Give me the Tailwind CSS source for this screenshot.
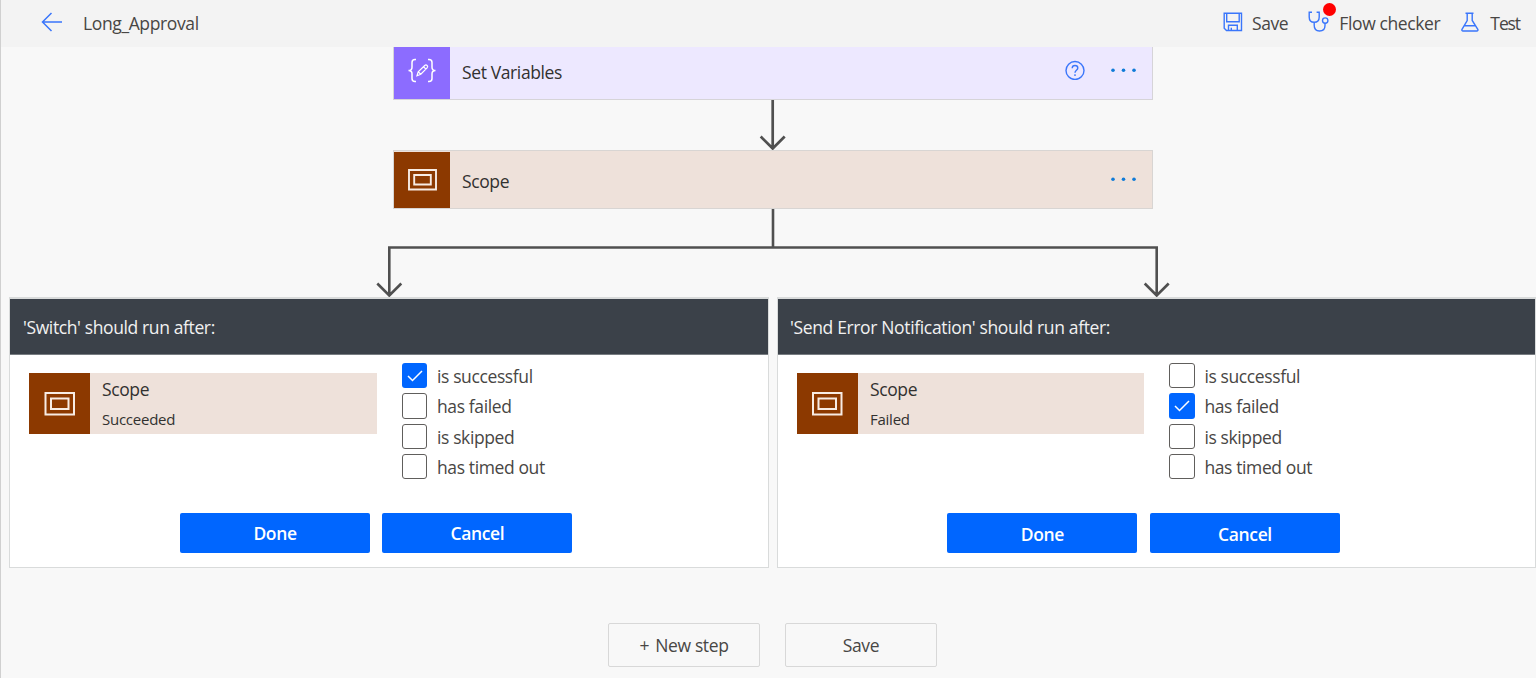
<!DOCTYPE html>
<html lang="en">
<head>
    <meta charset="UTF-8">
    <meta name="viewport" content="width=device-width, initial-scale=1.0">
    <title>Long_Approval</title>
    <script src="https://cdn.jsdelivr.net/npm/@tailwindcss/browser@4"></script>
</head>
<body class="h-[678px] overflow-hidden bg-[#f8f8f8] font-['Open_Sans','Noto_Sans',sans-serif] text-[17.5px] leading-6 tracking-[-0.38px] text-[#484644]">
<div class="h-full w-[1537px] border-l border-[#d0d0d0]">
    <header class="flex h-[47px] items-start justify-between bg-[#f3f3f3] pl-10 pr-[17px]">
        <div class="flex pt-[11px]">
            <svg class="mt-px h-5 w-[22px]" viewBox="0 0 22 20" fill="none" stroke="#3a76fb" stroke-width="1.5"><path d="M21 10H1.5M10.5 1L1.5 10l9 9"/></svg>
            <h1 class="ml-5">Long_Approval</h1>
        </div>
        <nav class="flex pt-[11px]">
            <button class="flex">
                <svg class="mt-px h-5 w-5" viewBox="0 0 20 20" fill="none" stroke="#3a76fb" stroke-width="1.4"><path d="M1.2 1.2h17.3v17.3H3.5l-2.300-2.200zM3.700 1.200v8.500h12.500v-8.500M5.500 18.500v-5.300h8.800v5.300M8.300 18.500v-2.800"/></svg>
                <span class="ml-[9px]">Save</span>
            </button>
            <button class="relative ml-5 flex">
                <svg class="h-[22px] w-[22px]" viewBox="0 0 22 22" fill="none" stroke="#3a76fb" stroke-width="1.4"><path d="M4 1.200H1.200V6c0 3.200 2 5.300 5 5.300s5-2.100 5-5.300V1.200H8.600M6.200 11.300v2.900c0 3.600 2 5.800 5.300 5.800s5.500-2.200 5.500-5.500v-2.200"/><circle cx="17.200" cy="9.600" r="2.700"/></svg>
                <span class="absolute -top-2 left-[15px] size-[13px] rounded-full bg-[#ff0000]"></span>
                <span class="ml-[9px]">Flow checker</span>
            </button>
            <button class="ml-[21px] flex">
                <svg class="mt-px h-5 w-[18px]" viewBox="0 0 18 20" fill="none" stroke="#3a76fb" stroke-width="1.4"><path d="M4.500 1.200h8M6.200 1.200v7.300L1 17.300c-.4.900 0 1.700 1 1.700h13.800c1 0 1.400-.8 1-1.700L11.200 8.500V1.200M3.500 13.800h10.800"/></svg>
                <span class="ml-[11px] tracking-[-1.1px]">Test</span>
            </button>
        </nav>
    </header>

    <main>
        <!-- Set Variables -->
        <section class="ml-[392px] flex h-[53px] w-[760px] border-x border-b border-[#d6d4d8] bg-[#ede8ff] text-[#323130]">
            <div class="flex w-14 justify-center bg-[#8c6cff] pt-[11px]">
                <svg class="h-[26px] w-[30px]" viewBox="0 0 30 26" fill="none" stroke="#fff" stroke-width="1.5"><path d="M9 1.500H8c-2 0-3 1-3 3v4.700c0 2-1.200 3.300-3.500 3.300C3.800 12.500 5 13.800 5 15.800v4.700c0 2 1 3 3 3h1M21 1.500h1c2 0 3 1 3 3v4.700c0 2 1.200 3.300 3.500 3.300-2.300 0-3.500 1.300-3.500 3.300v4.700c0 2-1 3-3 3h-1"/><path stroke-width="1.200" d="M10 17.700l1.200-4 6.500-6.200c.8-.7 1.700-.7 2.400 0s.7 1.600 0 2.300l-6.300 6.400zM11.200 13.700l2.600 2.500M16.500 8.700l2.500 2.400"/></svg>
            </div>
            <h2 class="ml-3 mt-[13px]">Set Variables</h2>
            <svg class="ml-auto mt-[13px] h-5 w-5" viewBox="0 0 20 20" fill="none" stroke="#3a76fb" stroke-width="1.400"><circle cx="10" cy="10.500" r="9"/><path d="M7.200 8.200c0-1.700 1.200-2.700 2.800-2.700s2.800 1 2.800 2.500c0 2.200-2.800 2.400-2.800 4.700M10 14.300v1.600"/></svg>
            <svg class="ml-[26px] mr-[15px] mt-[21px] h-1 w-[26px]" viewBox="0 0 26 4" fill="#0f7bd8"><circle cx="2" cy="2.200" r="1.800"/><circle cx="12.500" cy="2.200" r="1.800"/><circle cx="23" cy="2.200" r="1.800"/></svg>
        </section>
        <svg class="ml-[757px] h-[50px] w-[30px]" viewBox="0 0 30 50" fill="none" stroke="#505050" stroke-width="2.700"><path d="M14.700 0v48M2.700 36.500l12 12 12-12"/></svg>

        <!-- Scope -->
        <section class="ml-[392px] flex h-[59px] w-[760px] border border-[#d8d5d3] bg-[#eee1da] text-[#323130]">
            <div class="mt-px flex w-14 items-center justify-center bg-[#8c3900]">
                <svg class="h-[22px] w-[29px]" viewBox="0 0 29 22" fill="none" stroke="#f7ece4" stroke-width="1.900"><path d="M1 1h27v19.500H1zM6.200 6h16.600v9.500H6.200z"/></svg>
            </div>
            <h2 class="ml-3 mt-[18px]">Scope</h2>
            <svg class="ml-auto mr-[15px] mt-[26px] h-1 w-[26px]" viewBox="0 0 26 4" fill="#0f7bd8"><circle cx="2" cy="2.200" r="1.800"/><circle cx="12.500" cy="2.200" r="1.800"/><circle cx="23" cy="2.200" r="1.800"/></svg>
        </section>
        <svg class="ml-[373px] h-[88px] w-[800px]" viewBox="0 0 800 88" fill="none" stroke="#505050" stroke-width="2.600"><path d="M399 0v38M15.300 86V38.500h767.400V86M3.300 74.500l12 12 12-12M770.700 74.500l12 12 12-12"/></svg>

        <div class="ml-2 flex gap-2">
            <!-- Run after: Switch -->
            <section class="h-[271px] w-[760px] shrink-0 border border-t-2 border-[#d9dbdb] bg-white">
                <h3 class="flex h-14 items-center border-b border-[#777c81] bg-[#3b4149] pl-[13px] text-[#f1f1f1]">'Switch' should run after:</h3>
                <div class="flex pl-[19px] pt-2">
                    <div class="mt-[10px] flex h-[61px] w-[348px] bg-[#eee1da] text-[#323130]">
                        <div class="flex w-[61px] items-center justify-center bg-[#8c3900]">
                            <svg class="h-6 w-[31px]" viewBox="0 0 31 24" fill="none" stroke="#f7ece4" stroke-width="2"><path d="M1.500 1h28.500v21.500H1.500zM7 6.500h17.500v10.500H7z"/></svg>
                        </div>
                        <div class="ml-3 mt-1">
                            <p>Scope</p>
                            <p class="mt-1.5 text-[15px] tracking-[-0.25px]">Succeeded</p>
                        </div>
                    </div>
                    <ul class="ml-[25px]">
                        <li class="flex h-[30.400px]"><span class="flex size-[25.300px] items-center justify-center rounded-[3px] bg-[#0066ff]"><svg class="h-3 w-4" viewBox="0 0 16 12" fill="none" stroke="#fff" stroke-width="1.500"><path d="M1 6l4.500 4.500L15 1"/></svg></span><span class="ml-[9.700px] mt-px">is successful</span></li>
                        <li class="flex h-[30.400px]"><span class="size-[25.300px] rounded-[3px] border border-[#605e5c]"></span><span class="ml-[9.700px] mt-px">has failed</span></li>
                        <li class="flex h-[30.400px]"><span class="size-[25.300px] rounded-[3px] border border-[#605e5c]"></span><span class="ml-[9.700px] mt-px">is skipped</span></li>
                        <li class="flex h-[30.400px]"><span class="size-[25.300px] rounded-[3px] border border-[#605e5c]"></span><span class="ml-[9.700px] mt-px">has timed out</span></li>
                    </ul>
                </div>
                <div class="ml-[170px] mt-7 flex gap-[12.400px] font-semibold text-white">
                    <button class="h-10 w-[190px] rounded-[2px] bg-[#0066ff]">Done</button>
                    <button class="h-10 w-[190px] rounded-[2px] bg-[#0066ff]">Cancel</button>
                </div>
            </section>

            <!-- Run after: Send Error Notification -->
            <section class="h-[271px] w-[759px] shrink-0 border border-t-2 border-[#d9dbdb] bg-white">
                <h3 class="flex h-14 items-center border-b border-[#777c81] bg-[#3b4149] pl-3 tracking-[-0.35px] text-[#f1f1f1]">'Send Error Notification' should run after:</h3>
                <div class="flex pl-[19px] pt-2">
                    <div class="mt-[10px] flex h-[61px] w-[347px] bg-[#eee1da] text-[#323130]">
                        <div class="flex w-[61px] items-center justify-center bg-[#8c3900]">
                            <svg class="h-6 w-[31px]" viewBox="0 0 31 24" fill="none" stroke="#f7ece4" stroke-width="2"><path d="M1 1h28.500v21.500H1zM6.500 6.500h17.500v10.500H6.500z"/></svg>
                        </div>
                        <div class="ml-3 mt-1">
                            <p>Scope</p>
                            <p class="mt-1.5 text-[15px] tracking-[-0.25px]">Failed</p>
                        </div>
                    </div>
                    <ul class="ml-[25.400px]">
                        <li class="flex h-[30.400px]"><span class="size-[25.300px] rounded-[3px] border border-[#605e5c]"></span><span class="ml-[9.700px] mt-px">is successful</span></li>
                        <li class="flex h-[30.400px]"><span class="flex size-[25.300px] items-center justify-center rounded-[3px] bg-[#0066ff]"><svg class="h-3 w-4" viewBox="0 0 16 12" fill="none" stroke="#fff" stroke-width="1.500"><path d="M1 6l4.500 4.500L15 1"/></svg></span><span class="ml-[9.700px] mt-px">has failed</span></li>
                        <li class="flex h-[30.400px]"><span class="size-[25.300px] rounded-[3px] border border-[#605e5c]"></span><span class="ml-[9.700px] mt-px">is skipped</span></li>
                        <li class="flex h-[30.400px]"><span class="size-[25.300px] rounded-[3px] border border-[#605e5c]"></span><span class="ml-[9.700px] mt-px">has timed out</span></li>
                    </ul>
                </div>
                <div class="ml-[169.400px] mt-7 flex gap-[12.600px] font-semibold text-white">
                    <button class="h-10 w-[190px] rounded-[2px] bg-[#0066ff] pt-0.5">Done</button>
                    <button class="h-10 w-[190px] rounded-[2px] bg-[#0066ff] pt-0.5">Cancel</button>
                </div>
            </section>
        </div>

        <div class="ml-[607px] mt-[55px] flex gap-[25px]">
            <button class="h-11 w-[152px] rounded-[2px] border border-[#d8d8d8]"><span class="mr-0.5">+</span> New step</button>
            <button class="h-11 w-[152px] rounded-[2px] border border-[#d8d8d8]">Save</button>
        </div>
    </main>
</div>
</body>
</html>
